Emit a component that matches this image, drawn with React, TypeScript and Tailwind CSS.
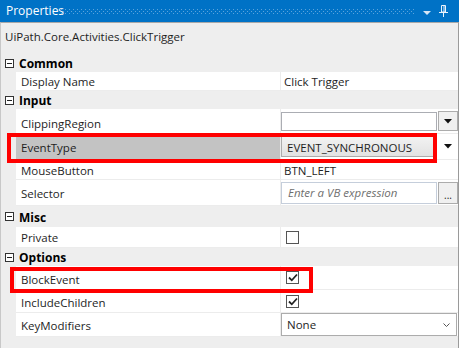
import React from 'react';

const font = { fontFamily: '"Open Sans", "Noto Sans", sans-serif' };

const MinusBox = () => (
  <div className="w-[9px] h-[9px] border border-[#333] flex items-center justify-center bg-white">
    <div className="w-[5px] h-px bg-[#222]"></div>
  </div>
);

const Check = ({ checked }: { checked?: boolean }) => (
  <div className="w-[13px] h-[13px] border border-[#555] bg-white flex items-center justify-center">
    {checked && (
      <svg width="10" height="9" viewBox="0 0 10 9">
        <path d="M1 4.5 L3.8 7.3 L9 1.5" fill="none" stroke="#222" strokeWidth="1.8" />
      </svg>
    )}
  </div>
);

const DropArrow = () => (
  <svg width="8" height="5" viewBox="0 0 8 5">
    <path d="M0 0 H8 L4 4.5 Z" fill="#111" />
  </svg>
);

const Header = ({ label, h }: { label: string; h: string }) => (
  <div className={`flex items-center ${h}`}>
    <div className="w-[15px] flex justify-center pl-px">
      <MinusBox />
    </div>
    <span className="pl-[3px] pt-[2px] font-bold text-[12px] text-black">{label}</span>
  </div>
);

const Row = ({
  label,
  h,
  pt = 'pt-[2px]',
  nameBg = 'bg-white',
  children,
}: {
  label: string;
  h: string;
  pt?: string;
  nameBg?: string;
  children?: React.ReactNode;
}) => (
  <div className={`flex ${h}`}>
    <div className="w-[15px]"></div>
    <div className={`w-[265px] ${nameBg} ${pt} border-r border-b border-[#ececec] flex items-center pl-[5px] text-[11.5px] text-[#1e1e1e]`}>
      {label}
    </div>
    <div className="flex-1 bg-white border-b border-[#ececec] flex items-center">{children}</div>
  </div>
);

export default function App() {
  return (
    <div className="w-[459px] h-[348px] bg-[#eeeeee] flex flex-col overflow-hidden relative" style={font}>
      {/* Title bar */}
      <div className="h-[22px] bg-[#0072c6] flex items-center shrink-0">
        <span className="w-[61px] pl-[6px] text-white text-[12px] leading-none">Properties</span>
        <svg className="mt-px" width="354" height="5">
          <defs>
            <pattern id="dots" width="4" height="4" patternUnits="userSpaceOnUse">
              <rect x="0" y="0" width="1" height="1" fill="#5aa3dc" />
              <rect x="2" y="2" width="1" height="1" fill="#5aa3dc" />
            </pattern>
          </defs>
          <rect width="354" height="5" fill="url(#dots)" />
        </svg>
        <svg className="ml-[8px] mt-[3px]" width="8" height="4" viewBox="0 0 8 4">
          <path d="M0 0 H8 L4 4 Z" fill="#d6e6f5" />
        </svg>
        <svg className="ml-[8px]" width="9" height="12" viewBox="0 0 9 12">
          <path d="M2.5 0.5 H6.5 V7 H2.5 Z M5 1 V7" fill="none" stroke="#eaf2fb" strokeWidth="1" />
          <path d="M0 7.5 H9 M4.5 7.5 V12" stroke="#eaf2fb" strokeWidth="1" />
        </svg>
      </div>

      {/* Body */}
      <div className="flex-1 border-t border-[#a8a8a8] border-l border-l-[#c8c8c8] border-r border-r-[#9a9a9a] flex flex-col">
        <div className="h-[25px] flex items-center pl-[4px] pt-[2px] text-[11.5px] text-[#1e1e1e]">
          UiPath.Core.Activities.ClickTrigger
        </div>
        <div className="h-[6px]"></div>

        <Header label="Common" h="h-[18px]" />
        <Row label="Display Name" h="h-[19px]">
          <span className="pl-[3px] pt-[2px] text-[11.5px] text-[#1e1e1e]">Click Trigger</span>
        </Row>

        <Header label="Input" h="h-[18px]" />
        <Row label="ClippingRegion" h="h-[25px]" pt="pt-[5px]">
          <div className="flex items-center w-full gap-px">
            <div className="w-[156px] h-[19px] border border-[#abadb3] bg-white"></div>
            <div className="w-[20px] h-[20px] border border-[#acacac] bg-[#f0f0f0] flex items-center justify-center">
              <DropArrow />
            </div>
          </div>
        </Row>
        <Row label="EventType" h="h-[26px]" pt="pt-[3px]" nameBg="bg-[#c3c3c3]">
          <div className="flex items-center w-full gap-px">
            <div className="w-[156px] h-[21px] border border-[#acacac] bg-gradient-to-b from-[#f2f2f2] to-[#e2e2e2] flex items-center pl-[5px] pt-[2px] text-[11.5px] text-[#1e1e1e]">
              EVENT_SYNCHRONOUS
            </div>
            <div className="w-[20px] h-[21px] bg-white flex items-center justify-center">
              <DropArrow />
            </div>
          </div>
        </Row>
        <Row label="MouseButton" h="h-[20px]">
          <span className="pl-[3px] pt-[2px] text-[11.5px] text-[#1e1e1e]">BTN_LEFT</span>
        </Row>
        <Row label="Selector" h="h-[26px]">
          <div className="flex items-center w-full gap-px">
            <div className="w-[156px] h-[22px] border border-[#c5cedb] bg-white flex items-center pl-[6px] pt-px text-[11.5px] italic text-[#6e6e6e]">
              Enter a VB expression
            </div>
            <div className="w-[20px] h-[22px] border border-[#acacac] bg-[#f0f0f0] flex items-end justify-center pb-[3px] text-[10px] leading-none text-[#222]">
              ...
            </div>
          </div>
        </Row>

        <Header label="Misc" h="h-[21px]" />
        <Row label="Private" h="h-[21px]">
          <div className="pl-[5px]">
            <Check />
          </div>
        </Row>

        <Header label="Options" h="h-[18px]" />
        <Row label="BlockEvent" h="h-[24px]" pt="pt-[5px]">
          <div className="pl-[5px]">
            <Check checked />
          </div>
        </Row>
        <Row label="IncludeChildren" h="h-[23px]" pt="pt-[3px]">
          <div className="pl-[5px]">
            <Check checked />
          </div>
        </Row>
        <Row label="KeyModifiers" h="h-[24px]">
          <div className="w-[176px] h-[23px] border border-[#acacac] bg-white flex items-center justify-between pl-[5px] pr-[6px] pt-px text-[11.5px] text-[#1e1e1e]">
            <span>None</span>
            <svg width="7" height="4" viewBox="0 0 7 4">
              <path d="M0.5 0.5 L3.5 3.5 L6.5 0.5" fill="none" stroke="#555" strokeWidth="1" />
            </svg>
          </div>
        </Row>
      </div>

      {/* Red annotation boxes */}
      <div className="absolute left-[7px] top-[133px] w-[430px] h-[30px] border-4 border-[#ff0000]"></div>
      <div className="absolute left-[10px] top-[267px] w-[303px] h-[26px] border-4 border-[#ff0000]"></div>
    </div>
  );
}
